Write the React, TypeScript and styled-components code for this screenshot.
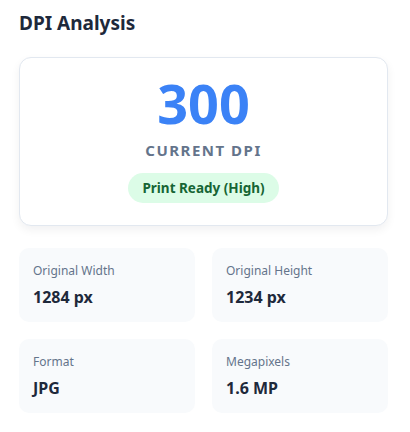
import styled, { createGlobalStyle } from "styled-components";

const GlobalStyle = createGlobalStyle`
  body {
    margin: 0;
    background: #ffffff;
    font-family: "Noto Sans", "Open Sans", sans-serif;
  }
`;

type Stat = { label: string; value: string };

const stats: Stat[] = [
  { label: "Original Width", value: "1284 px" },
  { label: "Original Height", value: "1234 px" },
  { label: "Format", value: "JPG" },
  { label: "Megapixels", value: "1.6 MP" },
];

const App: React.FC = () => {
  return (
    <Page>
      <GlobalStyle />
      <Title>DPI Analysis</Title>
      <DpiCard>
        <DpiValue>300</DpiValue>
        <DpiLabel>Current DPI</DpiLabel>
        <Badge>Print Ready (High)</Badge>
      </DpiCard>
      <StatGrid>
        {stats.map((s) => (
          <StatCard key={s.label}>
            <StatLabel>{s.label}</StatLabel>
            <StatValue>{s.value}</StatValue>
          </StatCard>
        ))}
      </StatGrid>
    </Page>
  );
};

const Page = styled.div`
  padding: 10px 22px 0 19px;
`;

const Title = styled.h2`
  margin: 0 0 21px;
  font-size: 19px;
  font-weight: 700;
  color: #1e293b;
  line-height: 26px;
`;

const DpiCard = styled.div`
  display: flex;
  flex-direction: column;
  align-items: center;
  background: #ffffff;
  border: 1px solid #e2e8f0;
  border-radius: 12px;
  box-shadow: 0 4px 10px rgba(15, 23, 42, 0.06);
  padding: 18px 16px 22px;
`;

const DpiValue = styled.div`
  font-size: 54px;
  font-weight: 700;
  line-height: 54px;
  color: #3b82f6;
`;

const DpiLabel = styled.div`
  margin-top: 10px;
  font-size: 15px;
  font-weight: 700;
  letter-spacing: 1.5px;
  text-transform: uppercase;
  color: #64748b;
  line-height: 20px;
`;

const Badge = styled.span`
  margin-top: 13px;
  padding: 0 14px;
  height: 30px;
  line-height: 30px;
  border-radius: 15px;
  background: #dcfce7;
  color: #166534;
  font-size: 13.5px;
  font-weight: 700;
`;

const StatGrid = styled.div`
  display: grid;
  grid-template-columns: 1fr 1fr;
  gap: 17px;
  margin-top: 22px;
`;

const StatCard = styled.div`
  background: #f8fafc;
  border-radius: 10px;
  padding: 14px 14px 16px;
  height: 74px;
  box-sizing: border-box;
`;

const StatLabel = styled.div`
  font-size: 12px;
  color: #64748b;
  line-height: 18px;
`;

const StatValue = styled.div`
  margin-top: 6px;
  font-size: 16px;
  font-weight: 700;
  color: #1e293b;
  line-height: 22px;
`;

export default App;
